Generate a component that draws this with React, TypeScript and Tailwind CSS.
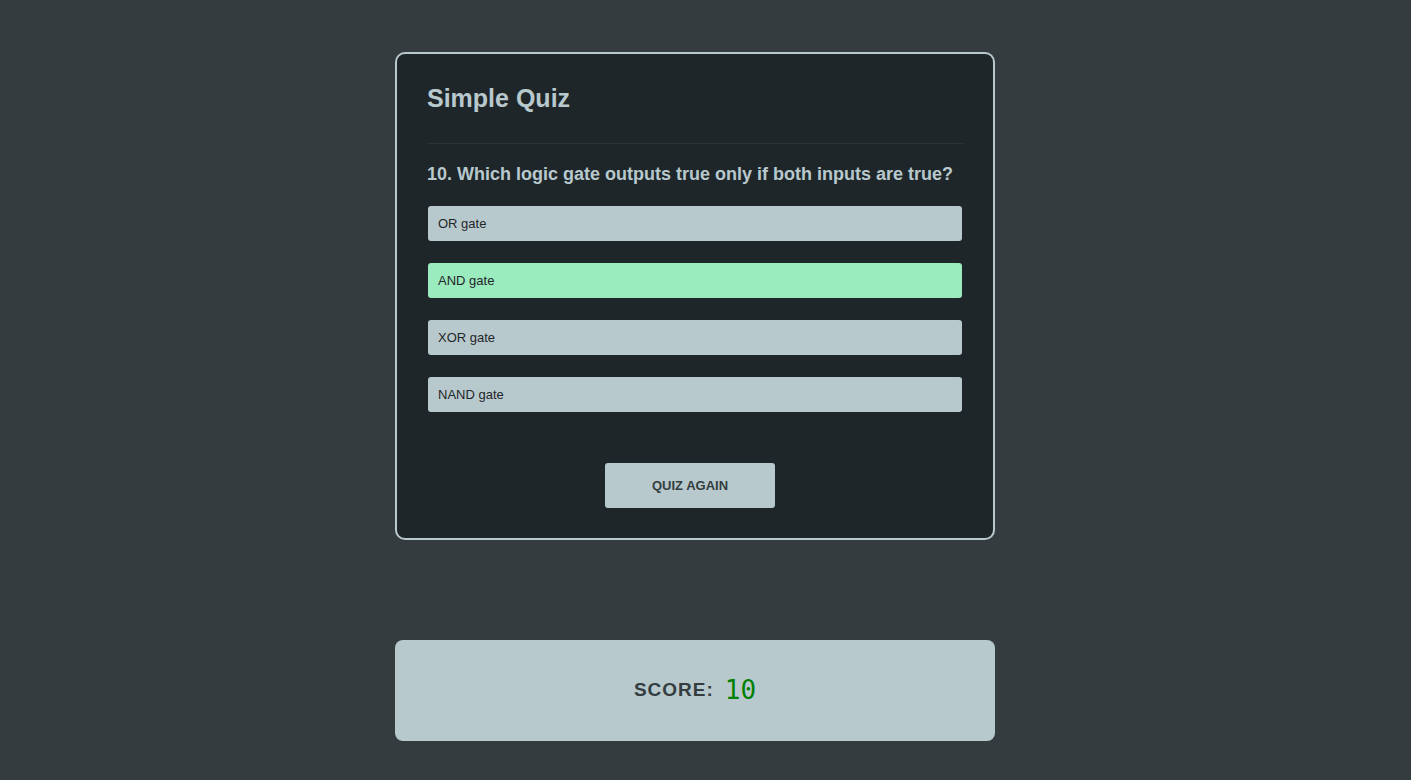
const options = ["OR gate", "AND gate", "XOR gate", "NAND gate"];
const correct = 1;

export default function App() {
  return (
    <div
      className="min-h-[780px] w-full bg-[#353c3f] flex flex-col items-center pt-[52px] pr-[21px] gap-[100px]"
      style={{ fontFamily: '"Liberation Sans", Arial, sans-serif' }}
    >
      {/* Quiz card */}
      <div className="w-[600px] rounded-[10px] border-2 border-[#b8c9cd] bg-[#1f2629] px-[30px] pt-[31px] pb-[30px]">
        <h1 className="text-[25px] leading-[27px] font-bold text-[#b8c9cd]">Simple Quiz</h1>
        <div className="mt-[31px] h-px bg-[#2c3437]" />
        <h2 className="mt-[20px] text-[18px] leading-[21px] font-bold text-[#b8c9cd]">
          10. Which logic gate outputs true only if both inputs are true?
        </h2>
        <div className="mt-[21px] flex flex-col gap-[22px] mx-px">
          {options.map((opt, i) => (
            <div
              key={opt}
              className={
                "h-[35px] flex items-center pl-[10px] rounded-[3px] text-[13px] text-[#1f2629] " +
                (i === correct ? "bg-[#9aebbe]" : "bg-[#b8c9cd]")
              }
            >
              {opt}
            </div>
          ))}
        </div>
        <div className="mt-[51px] flex justify-center pr-[10px]">
          <button className="w-[170px] h-[45px] rounded-[3px] bg-[#b8c9cd] text-[13px] font-bold uppercase text-[#333d40]">
            Quiz Again
          </button>
        </div>
      </div>

      {/* Score */}
      <div className="w-[600px] h-[101px] rounded-[8px] bg-[#b8c9cd] flex items-center justify-center gap-[11px]">
        <span className="text-[19px] font-bold tracking-[1px] text-[#333d40]">SCORE:</span>
        <span
          className="text-[26px] text-[#008000]"
          style={{ fontFamily: '"DejaVu Sans Mono", monospace' }}
        >
          10
        </span>
      </div>
    </div>
  );
}
